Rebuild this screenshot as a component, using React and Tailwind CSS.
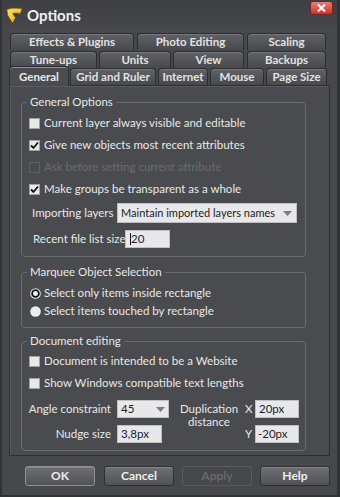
import React from "react";

const F = { fontFamily: "Lato, 'Open Sans', 'Liberation Sans', sans-serif" };

function Logo() {
  return (
    <svg width="19" height="19" viewBox="0 0 20 20" className="shrink-0">
      <defs>
        <linearGradient id="lg" x1="0" y1="0" x2="1" y2="1">
          <stop offset="0" stopColor="#ffe36a" />
          <stop offset="1" stopColor="#e7a915" />
        </linearGradient>
      </defs>
      <path d="M2 4 C6 2 12 2 18 3 L16 8 C13 7 10 7 8 8 L11 12 L8 18 L3 10 Z" fill="url(#lg)" stroke="#8a5a00" strokeWidth="0.6" />
      <path d="M8 8 L11 12 L13 9 Z" fill="#3a3c3f" />
    </svg>
  );
}

function Tab({ label, w, selected }) {
  if (selected) {
    return (
      <div
        className="relative z-10 h-[20px] -mb-[1px] rounded-t-[4px] border border-b-0 border-[#2c2e31] bg-[#4a4c4f] flex items-center justify-center text-[11.5px] font-bold whitespace-nowrap text-[#e8e8e8] shadow-[inset_0_1px_0_#8a8c8f]"
        style={{ width: w }}
      >
        {label}
      </div>
    );
  }
  return (
    <div
      className="h-[17px] rounded-t-[4px] border border-b-0 border-[#2c2e31] bg-gradient-to-b from-[#606265] to-[#48494c] flex items-center justify-center text-[11.5px] font-bold whitespace-nowrap text-[#e2e2e2] shadow-[inset_0_1px_0_#75777a]"
      style={{ width: w }}
    >
      {label}
    </div>
  );
}

function Check({ checked, disabled }) {
  if (disabled) {
    return <div className="w-[11px] h-[11px] border border-[#5d5f62] shrink-0" />;
  }
  return (
    <div className="w-[11px] h-[11px] bg-[#e9e9ea] border border-[#a0a2a5] shrink-0 flex items-center justify-center">
      {checked && (
        <svg width="9" height="9" viewBox="0 0 9 9">
          <path d="M1 4.5 L3.5 7 L8 1.5" fill="none" stroke="#111" strokeWidth="1.8" />
        </svg>
      )}
    </div>
  );
}

function Radio({ checked }) {
  return (
    <svg width="11" height="11" viewBox="0 0 11 11" className="shrink-0">
      <circle cx="5.5" cy="5.5" r="5.3" fill="#ededed" />
      {checked && <circle cx="5.5" cy="5.5" r="3.4" fill="none" stroke="#111" strokeWidth="1.8" />}
    </svg>
  );
}

function CheckRow({ label, checked, disabled }) {
  return (
    <div className="h-[22px] flex items-center pl-[7px] gap-[4px] whitespace-nowrap">
      <Check checked={checked} disabled={disabled} />
      <span className={disabled ? "text-[#696b6e]" : "text-[#e8e8e8]"}>{label}</span>
    </div>
  );
}

function Arrow() {
  return (
    <svg width="9" height="5" viewBox="0 0 9 5">
      <path d="M0 0 L9 0 L4.5 5 Z" fill="#7a7c7f" />
    </svg>
  );
}

function Button({ label, focused, disabled }) {
  if (disabled) {
    return (
      <div className="w-[70px] h-[20px] rounded-[3px] border border-[#5a5c5f] flex items-center justify-center text-[12px] font-bold text-[#66686b]">
        {label}
      </div>
    );
  }
  return (
    <div
      className={`w-[70px] h-[20px] rounded-[3px] border ${focused ? "border-[#8e9093]" : "border-[#2e3033]"} bg-gradient-to-b from-[#6e7073] to-[#505255] shadow-[inset_0_1px_0_#85878a] flex items-center justify-center text-[12px] font-bold text-[#eeeeee]`}
    >
      {label}
    </div>
  );
}

export default function App() {
  return (
    <div
      className="w-[340px] h-[497px] bg-[#46484b] border-l-2 border-r-[3px] border-b-2 border-[#313336] flex flex-col text-[11.5px] text-[#e8e8e8] overflow-hidden"
      style={F}
    >
      {/* title bar */}
      <div className="h-[28px] shrink-0 flex items-start bg-gradient-to-b from-[#3d3f42] to-[#45474a]">
        <div className="flex items-center gap-[3px] pl-[3px] pt-[4px]">
          <Logo />
          <span className="text-[15px] font-bold text-[#f0f0f0]">Options</span>
        </div>
        <div className="ml-auto mr-[4px] mt-[1px] w-[23px] h-[14px] rounded-[3px] bg-gradient-to-b from-[#ee7a72] to-[#c8322b] border border-[#7a2420] flex items-center justify-center">
          <svg width="9" height="8" viewBox="0 0 9 8">
            <path d="M1 0.5 L8 7.5 M8 0.5 L1 7.5" stroke="#fff" strokeWidth="2" />
          </svg>
        </div>
      </div>

      {/* tabs */}
      <div className="mt-[5px] flex flex-col">
        <div className="flex items-end gap-[3px] pl-[8px]">
          <Tab label="Effects & Plugins" w={124} />
          <Tab label="Photo Editing" w={107} />
          <Tab label="Scaling" w={79} />
        </div>
        <div className="flex items-end pl-[8px] mt-[1px]">
          <Tab label="Tune-ups" w={87} />
          <div className="w-[2px]" />
          <Tab label="Units" w={72} />
          <div className="w-[2px]" />
          <Tab label="View" w={71} />
          <div className="w-[3px]" />
          <Tab label="Backups" w={79} />
        </div>
        <div className="flex items-end h-[17px] pl-[7px]">
          <Tab label="General" w={60} selected />
          <div className="w-[1px]" />
          <Tab label="Grid and Ruler" w={86} />
          <div className="w-[2px]" />
          <Tab label="Internet" w={50} />
          <div className="w-[2px]" />
          <Tab label="Mouse" w={54} />
          <div className="w-[2px]" />
          <Tab label="Page Size" w={61} />
        </div>
      </div>

      {/* panel */}
      <div className="ml-[7px] w-[321px] h-[371px] border border-[#2c2e31] bg-[#494b4e] shadow-[inset_1px_1px_0_#5a5c5f] flex flex-col pl-[11px]">
        <fieldset className="mt-[8px] w-[285px] border border-[#6a6c6f] rounded-[4px]">
          <legend className="ml-[5px] px-[3px] leading-[16px] text-[#e8e8e8]">General Options</legend>
          <div className="pt-[2px]">
            <CheckRow label="Current layer always visible and editable" />
            <CheckRow label="Give new objects most recent attributes" checked />
            <CheckRow label="Ask before setting current attribute" disabled />
            <CheckRow label="Make groups be transparent as a whole" checked />
            <div className="h-[26px] flex items-center pl-[10px] whitespace-nowrap">
              <span className="w-[85px] shrink-0">Importing layers</span>
              <div className="w-[180px] h-[20px] bg-[#e8e8ea] border border-[#bdbfc2] flex items-center pl-[3px] pr-[4px] text-[11px] text-[#222]">
                <span>Maintain imported layers names</span>
                <span className="ml-auto"><Arrow /></span>
              </div>
            </div>
            <div className="h-[26px] flex items-center pl-[11px] whitespace-nowrap">
              <span className="w-[92px] shrink-0">Recent file list size</span>
              <div className="w-[45px] h-[18px] bg-[#e8e8ea] border border-[#bdbfc2] flex items-center pl-[4px] text-[#222]">
                <span className="w-[1px] h-[12px] bg-[#111]" />
                <span>20</span>
              </div>
            </div>
          </div>
          <div className="h-[4px]" />
        </fieldset>

        <fieldset className="mt-[7px] w-[285px] border border-[#6a6c6f] rounded-[4px]">
          <legend className="ml-[5px] px-[3px] leading-[16px]">Marquee Object Selection</legend>
          <div className="pt-[4px] pb-[7px] whitespace-nowrap">
            <div className="h-[18px] flex items-center pl-[8px] gap-[3px]">
              <Radio checked />
              <span>Select only items inside rectangle</span>
            </div>
            <div className="h-[18px] flex items-center pl-[8px] gap-[3px]">
              <Radio />
              <span>Select items touched by rectangle</span>
            </div>
          </div>
        </fieldset>

        <fieldset className="mt-[5px] w-[285px] border border-[#6a6c6f] rounded-[4px]">
          <legend className="ml-[5px] px-[3px] leading-[16px]">Document editing</legend>
          <div className="pt-[1px]">
            <CheckRow label="Document is intended to be a Website" />
            <CheckRow label="Show Windows compatible text lengths" />
            <div className="mt-[6px] flex pb-[7px] whitespace-nowrap">
              <div className="flex flex-col items-end w-[89px]">
                <div className="h-[18px] flex items-center">Angle constraint</div>
                <div className="h-[18px] mt-[7px] flex items-center">Nudge size</div>
              </div>
              <div className="flex flex-col ml-[6px]">
                <div className="w-[52px] h-[18px] bg-[#e8e8ea] border border-[#bdbfc2] flex items-center pl-[3px] pr-[3px] text-[#222]">
                  <span>45</span>
                  <span className="ml-auto"><Arrow /></span>
                </div>
                <div className="w-[45px] h-[18px] mt-[7px] bg-[#e8e8ea] border border-[#bdbfc2] flex items-center pl-[3px] text-[#222]">
                  3,8px
                </div>
              </div>
              <div className="ml-[11px] w-[58px] mt-[2px] flex flex-col items-center leading-[13px]">
                <span>Duplication</span>
                <span>distance</span>
              </div>
              <div className="flex flex-col ml-[7px]">
                <div className="flex items-center h-[18px]">
                  <span className="w-[10px]">X</span>
                  <div className="w-[44px] h-[18px] bg-[#e8e8ea] border border-[#bdbfc2] flex items-center pl-[3px] text-[#222]">20px</div>
                </div>
                <div className="flex items-center h-[18px] mt-[7px]">
                  <span className="w-[10px]">Y</span>
                  <div className="w-[44px] h-[18px] bg-[#e8e8ea] border border-[#bdbfc2] flex items-center pl-[2px] text-[#222]">-20px</div>
                </div>
              </div>
            </div>
          </div>
        </fieldset>
      </div>

      {/* buttons */}
      <div className="mt-[10px] flex gap-[8px] pl-[23px]">
        <div className="w-[71px]"><Button label="OK" focused /></div>
        <Button label="Cancel" />
        <Button label="Apply" disabled />
        <Button label="Help" />
      </div>
    </div>
  );
}
